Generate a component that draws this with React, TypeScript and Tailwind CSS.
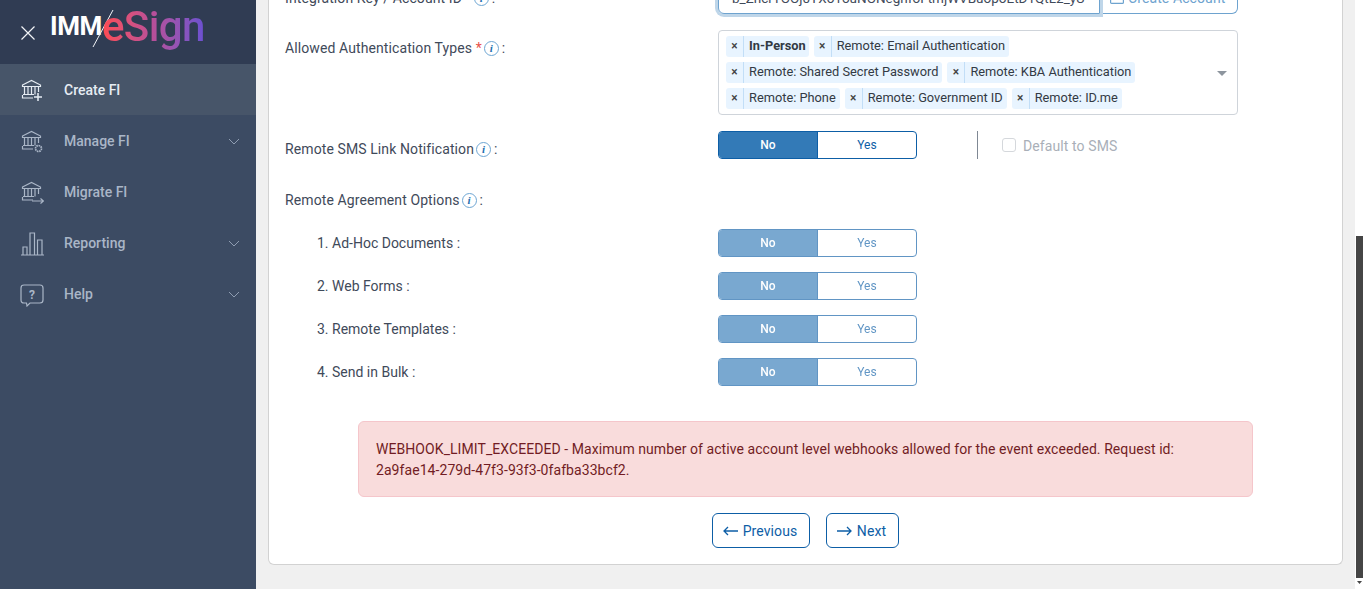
import React from "react";

const Bank = ({ extra }: { extra?: React.ReactNode }) => (
  <svg width="24" height="24" viewBox="0 0 24 24" fill="none" stroke="currentColor" strokeWidth="1.2" className="shrink-0">
    <path d="M2.5 6 L11.5 1.5 L20.5 6 V7.5 H2.5 Z" />
    <path d="M4.5 7.5 V15.5 M8 7.5 V15.5 M11.5 7.5 V15.5 M15 7.5 V15.5 M18.5 7.5 V13" />
    <path d="M3 15.5 H14 M2.5 16 V19 H13" />
    {extra}
  </svg>
);

const Chevron = () => (
  <svg width="12" height="7" viewBox="0 0 12 7" fill="none" stroke="currentColor" strokeWidth="1" className="ml-auto mr-[16px] text-[#8f9db2]">
    <path d="M1 1 L6 6 L11 1" />
  </svg>
);

const NavItem = ({ icon, label, active, chevron }: { icon: React.ReactNode; label: string; active?: boolean; chevron?: boolean }) => (
  <div className={active ? "flex h-[51px] items-center bg-[#475569] pl-[20px] pt-[2px] text-[#e6ecf3]" : "flex h-[51px] items-center pl-[20px] pt-[2px] text-[#aab6c7]"}>
    <span className="flex w-[44px] shrink-0">{icon}</span>
    <span className="text-[14px] font-medium tracking-normal">{label}</span>
    {chevron && <Chevron />}
  </div>
);

const Info = () => (
  <span className="ml-[2px] mr-[3px] inline-flex h-[15px] w-[15px] items-center justify-center rounded-full border border-[#6ea6d3] align-[1px] font-['Liberation_Serif',serif] text-[11px] font-bold italic leading-none text-[#1d6fb0]">
    i
  </span>
);

const Toggle = ({ disabled }: { disabled?: boolean }) => (
  <div className={disabled ? "flex h-[28px] w-[199px] shrink-0 rounded-[4px] border border-[#0d5ea6] text-[12px] tracking-normal opacity-[0.65]" : "flex h-[28px] w-[199px] shrink-0 rounded-[4px] border border-[#0d5ea6] text-[12px] tracking-normal"}>
    <span className="flex w-[98px] items-center justify-center rounded-l-[3px] bg-[#337ab7] font-medium text-white">No</span>
    <span className="flex flex-1 items-center justify-center border-l border-[#0d5ea6] text-[#0d5ea6]">Yes</span>
  </div>
);

const Chip = ({ label, bold }: { label: string; bold?: boolean }) => (
  <span className="flex h-[21px] items-center rounded-[3px] bg-[#e8f4ff] text-[12.8px] tracking-normal text-[#333a44]">
    <span className="flex h-full w-[18px] items-center justify-center border-r border-[#c2def7] pb-[2px] text-[12px] font-medium text-[#444]">×</span>
    <span className={bold ? "pb-[2px] pl-[5px] pr-[3px] font-bold" : "pb-[2px] pl-[5px] pr-[4px]"}>{label}</span>
  </span>
);

const SubRow = ({ label }: { label: string }) => (
  <div className="flex items-center">
    <span className="w-[433px] pl-[32px] tracking-normal">{label}</span>
    <Toggle disabled />
  </div>
);

export default function App() {
  return (
    <div className="flex h-[589px] w-[1366px] overflow-hidden bg-white font-['Roboto',sans-serif] text-[14px] tracking-[0.1px] text-[#3f4a5a]">
      <aside className="w-[256px] shrink-0 bg-[#3c4b63]">
        <div className="flex h-[64px] items-center bg-[#303c53] pl-[21px]">
          <svg width="14" height="14" viewBox="0 0 14 14" fill="none" stroke="#f2f4f7" strokeWidth="1.2" className="mr-[15px] mt-[2px] shrink-0">
            <path d="M0.5 0.5 L13.5 13.5 M13.5 0.5 L0.5 13.5" />
          </svg>
          <div className="flex items-center tracking-normal">
            <span className="mb-[12px] text-[26px] font-bold leading-none tracking-[-0.4px] text-white">IMM</span>
            <svg width="24" height="40" viewBox="0 0 24 40" fill="none" stroke="#f2f4f7" strokeWidth="1" className="-ml-[11px] -mr-[13px] mb-[7px] shrink-0">
              <path d="M2 38 L22 1" />
            </svg>
            <span className="mb-[2px] bg-gradient-to-r from-[#ff4a50] via-[#b74f9a] to-[#6a50d2] bg-clip-text pb-[8px] text-[42px] font-medium leading-none tracking-[-0.6px] text-transparent">eSign</span>
          </div>
        </div>
        <NavItem active label="Create FI" icon={<Bank extra={<path d="M18 14 V22 M14 18 H22" strokeWidth="1.5" />} />} />
        <NavItem label="Manage FI" chevron icon={<Bank extra={<circle cx="18.5" cy="18.5" r="3" strokeWidth="1.7" strokeDasharray="1.6 0.7" />} />} />
        <NavItem label="Migrate FI" icon={<Bank extra={<path d="M12 20 H23.5 M20.5 17.5 L23.5 20 L20.5 22.5" />} />} />
        <NavItem
          label="Reporting"
          chevron
          icon={
            <svg width="24" height="24" viewBox="0 0 24 24" fill="none" stroke="currentColor" strokeWidth="1.2" className="shrink-0">
              <path d="M1 23 H24 M3 23 V15 H7 V23 M10 23 V1 H14.5 V23 M17.5 23 V8 H22 V23" />
            </svg>
          }
        />
        <NavItem
          label="Help"
          chevron
          icon={
            <svg width="24" height="24" viewBox="0 0 24 24" fill="none" stroke="currentColor" strokeWidth="1.2" className="shrink-0">
              <path d="M4 2 H20 Q23 2 23 5 V17 Q23 20 20 20 H10 L7 23 L6.5 20 H4 Q1 20 1 17 V5 Q1 2 4 2 Z" />
              <text x="12" y="15.5" fontSize="12" fontWeight="700" textAnchor="middle" fill="currentColor" stroke="none">?</text>
            </svg>
          }
        />
      </aside>

      <main className="flex h-[589px] flex-1 flex-col justify-end overflow-hidden bg-[#f0f0f0] px-[12px] pb-[24px]">
        <div className="shrink-0 rounded-b-[6px] border-x border-b border-[#d2d2d2] bg-white pb-[16px] pl-[16px]">
          <div className="flex">
            <div className="w-[433px] pt-[6px]">
              Integration Key / Account ID <span className="text-[#e8524a]">*</span>
              <Info />:
            </div>
            <div className="flex h-[32px] items-center">
              <div className="relative z-10 flex h-full w-[382px] items-center rounded-l-[6px] border border-[#6ea3cf] pl-[13px] text-[13.5px] tracking-normal text-[#3f4a5a] shadow-[0_0_0_3px_#bfd6e9]">
                b_ZncrTOOj0YXo1ouNONeghfoFtmjWVBuopoEtD1QtL2_yU
              </div>
              <div className="flex h-full w-[138px] items-center rounded-r-[6px] border border-l-0 border-[#6ea3cf] pl-[10px] text-[14px] text-[#6ea3cf]">
                <svg width="14" height="12" viewBox="0 0 14 12" fill="none" stroke="currentColor" strokeWidth="1.2" className="mr-[4px] shrink-0">
                  <rect x="0.6" y="0.6" width="12.8" height="10.8" rx="1" />
                </svg>
                Create Account
              </div>
            </div>
          </div>

          <div className="mt-[16px] flex">
            <div className="w-[433px] pt-[8px]">
              Allowed Authentication Types <span className="text-[#e8524a]">*</span>
              <Info />:
            </div>
            <div className="flex h-[85px] w-[520px] rounded-[4px] border border-[#cfd4da] pl-[7px] pt-[5px]">
              <div className="flex w-[470px] flex-col gap-[5px]">
                <div className="flex gap-[5px]">
                  <Chip bold label="In-Person" />
                  <Chip label="Remote: Email Authentication" />
                </div>
                <div className="flex gap-[5px]">
                  <Chip label="Remote: Shared Secret Password" />
                  <Chip label="Remote: KBA Authentication" />
                </div>
                <div className="flex gap-[5px]">
                  <Chip label="Remote: Phone" />
                  <Chip label="Remote: Government ID" />
                  <Chip label="Remote: ID.me" />
                </div>
              </div>
              <svg width="10" height="5" viewBox="0 0 10 5" className="ml-[21px] mt-[35px] shrink-0">
                <path d="M0 0 H10 L5 5 Z" fill="#8d959e" />
              </svg>
            </div>
          </div>

          <div className="mt-[16px] flex">
            <div className="w-[433px] pt-[8px]">
              Remote SMS Link Notification
              <Info />:
            </div>
            <Toggle />
            <div className="ml-[60px] h-[28px] w-px bg-[#7f8894]" />
            <div className="ml-[24px] flex h-[28px] items-center text-[#a9afb8]">
              <span className="mr-[7px] h-[14px] w-[14px] rounded-[3px] border border-[#d5d8dc]" />
              <span className="pt-[2px]">Default to SMS</span>
            </div>
          </div>

          <div className="mt-[30px] h-[21px]">
            Remote Agreement Options
            <Info />:
          </div>

          <div className="mt-[18px] flex flex-col gap-[15px]">
            <SubRow label="1. Ad-Hoc Documents :" />
            <SubRow label="2. Web Forms :" />
            <SubRow label="3. Remote Templates :" />
            <SubRow label="4. Send in Bulk :" />
          </div>

          <div className="ml-[73px] mt-[35px] h-[76px] w-[895px] rounded-[6px] border border-[#f5c6cb] bg-[#f9dcdc] py-[17px] pl-[17px] pr-[16px] leading-[21px] tracking-[0.07px] text-[#721c24]">
            WEBHOOK_LIMIT_EXCEEDED - Maximum number of active account level webhooks allowed for the event exceeded. Request id: 2a9fae14-279d-47f3-93f3-0fafba33bcf2.
          </div>

          <div className="ml-[427px] mt-[16px] flex gap-[16px] text-[#0d5ea6]">
            <div className="flex h-[35px] w-[98px] items-center justify-center gap-[5px] rounded-[6px] border border-[#0d5ea6] pr-[2px] pt-[1px]">
              <svg width="15" height="10" viewBox="0 0 15 10" fill="none" stroke="currentColor" strokeWidth="1.3"><path d="M15 5 H1 M5 1 L1 5 L5 9" /></svg>
              Previous
            </div>
            <div className="flex h-[35px] w-[73px] items-center justify-center gap-[5px] rounded-[6px] border border-[#0d5ea6] pr-[2px] pt-[1px]">
              <svg width="15" height="10" viewBox="0 0 15 10" fill="none" stroke="currentColor" strokeWidth="1.3"><path d="M0 5 H14 M10 1 L14 5 L10 9" /></svg>
              Next
            </div>
          </div>
        </div>
      </main>

      <div className="flex h-[589px] w-[11px] shrink-0 flex-col items-center bg-white pr-[2px] pt-[236px]">
        <div className="h-[342px] w-[7px] bg-[#454545]" />
        <svg width="5" height="3" viewBox="0 0 5 3" className="mt-[3px]"><path d="M0 0 H5 L2.5 3 Z" fill="#454545" /></svg>
      </div>
    </div>
  );
}
